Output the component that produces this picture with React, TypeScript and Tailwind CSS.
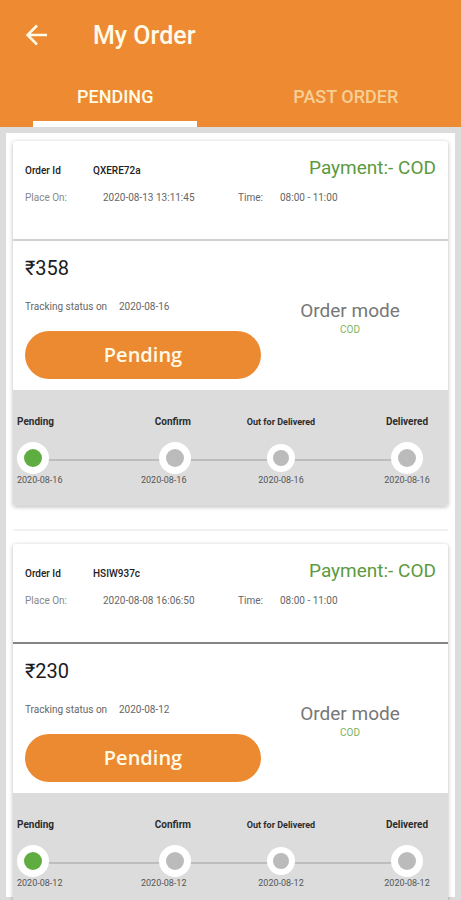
type Order = {
  id: string;
  placedOn: string;
  time: string;
  amount: string;
  date: string;
  divider: string;
};

const orders: Order[] = [
  {
    id: "QXERE72a",
    placedOn: "2020-08-13 13:11:45",
    time: "08:00 - 11:00",
    amount: "₹358",
    date: "2020-08-16",
    divider: "border-[#d0d0d0]",
  },
  {
    id: "HSIW937c",
    placedOn: "2020-08-08 16:06:50",
    time: "08:00 - 11:00",
    amount: "₹230",
    date: "2020-08-12",
    divider: "border-[#858585]",
  },
];

function Dot({ active = false, small = false }: { active?: boolean; small?: boolean }) {
  return (
    <span className="flex h-8 items-center">
      <span
        className={`flex items-center justify-center rounded-full bg-white ${small ? "size-7" : "size-8"}`}
      >
        <span
          className={`rounded-full ${small ? "size-4" : "size-[18px]"} ${active ? "bg-[#5fad41]" : "bg-[#bbbbbb]"}`}
        />
      </span>
    </span>
  );
}

function Timeline({ date }: { date: string }) {
  const label = "mb-[14px] font-bold text-[#2c2c2c]";
  const when = "text-[9px] text-[#555555]";
  return (
    <div className="bg-[#dcdcdc] pt-[26px] pr-[18px] pb-5 pl-1">
      <ol className="relative grid grid-cols-[124fr_105fr_138fr_46px] text-[10px] leading-3 whitespace-nowrap">
        <li aria-hidden="true" className="absolute top-[43px] right-4 left-4 h-0.5 bg-[#bdbdbd]" />
        <li className="relative flex w-fit flex-col items-start">
          <span className={label}>Pending</span>
          <Dot active />
          <span className={when}>{date}</span>
        </li>
        <li className="relative flex w-[50px] flex-col items-end">
          <span className={label}>Confirm</span>
          <Dot />
          <span className={`${when} self-start`}>{date}</span>
        </li>
        <li className="relative flex w-[70px] flex-col items-center">
          <span className={`${label} text-[9px]`}>Out for Delivered</span>
          <Dot small />
          <span className={when}>{date}</span>
        </li>
        <li className="relative flex flex-col items-center">
          <span className={label}>Delivered</span>
          <Dot />
          <span className={when}>{date}</span>
        </li>
      </ol>
    </div>
  );
}

function OrderCard({ order }: { order: Order }) {
  return (
    <article className="overflow-hidden rounded-[3px] bg-white shadow-[0_1px_4px_rgba(0,0,0,0.28)]">
      <div className={`border-b-2 px-3 pt-4 pb-[33px] text-[10px] leading-4 ${order.divider}`}>
        <div className="flex h-[22px] items-center">
          <span className="mt-[6px] w-[68px] font-medium text-[#222222]">Order Id</span>
          <span className="mt-[6px] flex-1 font-medium text-[#222222]">{order.id}</span>
          <span className="text-[19px] leading-[22px] text-[#5c9a40]">Payment:- COD</span>
        </div>
        <div className="mt-[11px] flex text-[#666666]">
          <span className="w-[78px] text-[#888888]">Place On:</span>
          <span className="w-[135px]">{order.placedOn}</span>
          <span className="w-[42px]">Time:</span>
          <span>{order.time}</span>
        </div>
      </div>
      <div className="flex pb-[11px] pl-3">
        <div className="w-[236px] pt-[15px]">
          <p className="text-xl leading-6 text-[#1c1c1c]">{order.amount}</p>
          <p className="mt-[19px] flex text-[10px] leading-4 text-[#666666]">
            <span className="w-[94px]">Tracking status on</span>
            <span>{order.date}</span>
          </p>
          <button
            type="button"
            className="mt-4 h-12 w-full rounded-full bg-[#ec8a31] font-['Open_Sans',sans-serif] text-xl font-semibold text-[#fffbe8]"
          >
            Pending
          </button>
        </div>
        <div className="flex-1 pt-[58px] pr-[9px] text-center">
          <p className="text-[19px] leading-6 text-[#777777]">Order mode</p>
          <p className="text-[10px] leading-[14px] text-[#7bb45f]">COD</p>
        </div>
      </div>
      <Timeline date={order.date} />
    </article>
  );
}

export default function App() {
  return (
    <div className="min-h-screen bg-[#dcdcdc] pb-1 font-[Roboto,sans-serif]">
      <header className="bg-[#ed8a32]">
        <div className="flex h-[71px] items-center px-[25px]">
          <button type="button" aria-label="Back" className="text-[#fffbe8]">
            <svg width="24" height="24" viewBox="0 0 24 24" fill="none" stroke="currentColor" strokeWidth="2.5">
              <path d="M22 11H3M12 1.5L2.5 11L12 20.5" />
            </svg>
          </button>
          <h1 className="ml-11 text-[25px] font-medium text-[#fffbe8]">My Order</h1>
        </div>
        <nav className="grid h-14 grid-cols-2 text-lg font-medium">
          <button type="button" className="flex flex-col items-center justify-between text-[#fffbe8]">
            <span className="pt-3">PENDING</span>
            <span className="h-[6px] w-[71%] bg-white" />
          </button>
          <button type="button" className="flex flex-col items-center text-[#f7cf94]">
            <span className="pt-3">PAST ORDER</span>
          </button>
        </nav>
      </header>
      <main className="mx-[6px] mt-[6px] flow-root bg-white px-[7px] pt-2">
        <OrderCard order={orders[0]} />
        <hr className="mt-[23px] mb-[13px] border-t-2 border-[#f1f1f1]" />
        <div className="-mb-3">
          <OrderCard order={orders[1]} />
        </div>
      </main>
    </div>
  );
}
